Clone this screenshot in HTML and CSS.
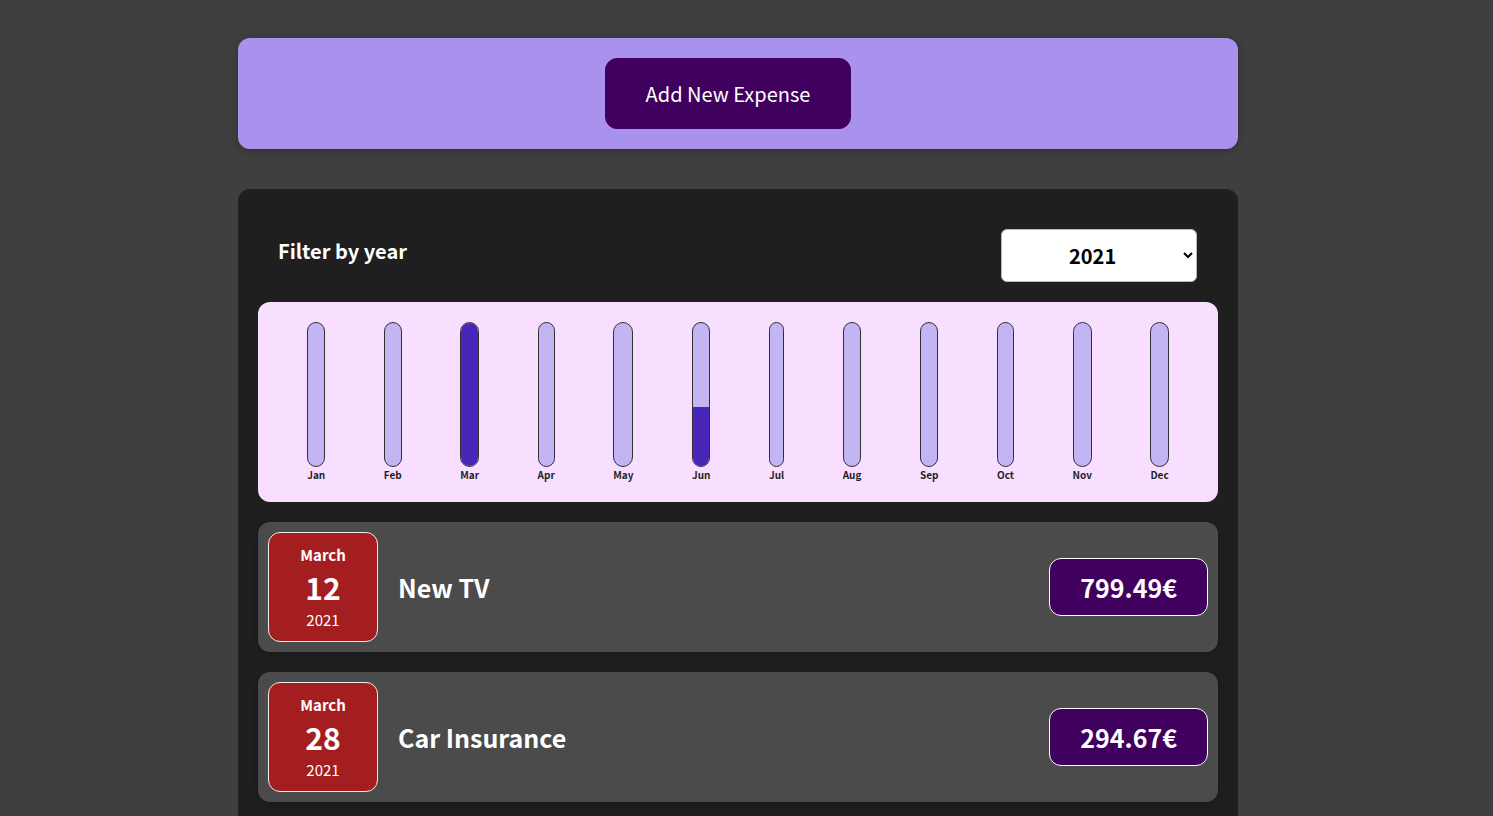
FILE: index.html
```html
<!DOCTYPE html>
<html lang="en">
<head>
<meta charset="utf-8">
<title>Expenses</title>
<link rel="stylesheet" href="styles.css">
</head>
<body>
<div class="new-expense">
  <button class="new-expense__btn">Add New Expense</button>
</div>
<div class="expenses">
  <div class="expenses-filter">
    <div class="expenses-filter__control">
      <label>Filter by year</label>
      <select>
        <option>2022</option>
        <option selected>2021</option>
        <option>2020</option>
        <option>2019</option>
      </select>
    </div>
  </div>
  <div class="chart">
    <div class="chart-bar"><div class="chart-bar__inner"></div><div class="chart-bar__label">Jan</div></div>
    <div class="chart-bar"><div class="chart-bar__inner"></div><div class="chart-bar__label">Feb</div></div>
    <div class="chart-bar"><div class="chart-bar__inner"><div class="chart-bar__fill" style="height:100%"></div></div><div class="chart-bar__label">Mar</div></div>
    <div class="chart-bar"><div class="chart-bar__inner"></div><div class="chart-bar__label">Apr</div></div>
    <div class="chart-bar"><div class="chart-bar__inner"></div><div class="chart-bar__label">May</div></div>
    <div class="chart-bar"><div class="chart-bar__inner"><div class="chart-bar__fill" style="height:41.13%"></div></div><div class="chart-bar__label">Jun</div></div>
    <div class="chart-bar"><div class="chart-bar__inner"></div><div class="chart-bar__label">Jul</div></div>
    <div class="chart-bar"><div class="chart-bar__inner"></div><div class="chart-bar__label">Aug</div></div>
    <div class="chart-bar"><div class="chart-bar__inner"></div><div class="chart-bar__label">Sep</div></div>
    <div class="chart-bar"><div class="chart-bar__inner"></div><div class="chart-bar__label">Oct</div></div>
    <div class="chart-bar"><div class="chart-bar__inner"></div><div class="chart-bar__label">Nov</div></div>
    <div class="chart-bar"><div class="chart-bar__inner"></div><div class="chart-bar__label">Dec</div></div>
  </div>
  <ul class="expenses-list">
    <li class="expense-item">
      <div class="expense-date">
        <div class="expense-date__month">March</div>
        <div class="expense-date__day">12</div>
        <div class="expense-date__year">2021</div>
      </div>
      <div class="expense-item__description">
        <h2>New TV</h2>
        <div class="expense-item__price">799.49€</div>
      </div>
    </li>
    <li class="expense-item">
      <div class="expense-date">
        <div class="expense-date__month">March</div>
        <div class="expense-date__day">28</div>
        <div class="expense-date__year">2021</div>
      </div>
      <div class="expense-item__description">
        <h2>Car Insurance</h2>
        <div class="expense-item__price">294.67€</div>
      </div>
    </li>
  </ul>
</div>
</body>
</html>
```

FILE: styles.css
```css
* {
  box-sizing: border-box;
}

html {
  font-family: "Noto Sans CJK JP", "Noto Sans", sans-serif;
  font-size: 20px;
}

body {
  margin: 0;
  padding: 38px 17px 0 0;
  background-color: #3f3f3f;
  overflow: hidden;
}

.new-expense {
  background-color: #a892ee;
  padding: 20px;
  margin: 0 auto;
  width: 1000px;
  border-radius: 12px;
  text-align: center;
  box-shadow: 0 1px 8px rgba(0, 0, 0, 0.25);
}

.new-expense__btn {
  font: inherit;
  cursor: pointer;
  padding: 20px 40px;
  border: 1px solid #40005d;
  background-color: #40005d;
  color: white;
  border-radius: 12px;
  margin-right: 20px;
}

.expenses {
  padding: 20px;
  background-color: #1f1f1f;
  margin: 40px auto;
  width: 1000px;
  border-radius: 12px;
}

.expenses-filter {
  color: white;
  padding: 0 20px;
}

.expenses-filter__control {
  display: flex;
  width: 100%;
  align-items: center;
  justify-content: space-between;
  margin: 20px 0;
}

.expenses-filter label {
  font-weight: bold;
  margin-bottom: 10px;
}

.expenses-filter select {
  font: inherit;
  padding: 10px 63px;
  font-weight: bold;
  border-radius: 6px;
  border: 1px solid #b9b9b9;
  background-color: white;
  color: black;
  margin-right: 1px;
}

.chart {
  padding: 20px;
  border-radius: 12px;
  background-color: #f8dfff;
  text-align: center;
  display: flex;
  justify-content: space-around;
  height: 200px;
}

.chart-bar {
  height: 100%;
  display: flex;
  flex-direction: column;
  align-items: center;
}

.chart-bar__inner {
  height: 100%;
  width: 100%;
  border: 1px solid #313131;
  border-radius: 12px;
  background-color: #c3b4f3;
  overflow: hidden;
  display: flex;
  flex-direction: column;
  justify-content: flex-end;
}

.chart-bar__fill {
  background-color: #4826b9;
  width: 100%;
}

.chart-bar__label {
  font-weight: bold;
  font-size: 10px;
  text-align: center;
  color: #1f1f1f;
}

.expenses-list {
  list-style: none;
  padding: 0;
  margin: 0;
}

.expense-item {
  display: flex;
  justify-content: space-between;
  align-items: center;
  box-shadow: 0 2px 8px rgba(0, 0, 0, 0.25);
  padding: 10px;
  margin: 20px 0;
  border-radius: 12px;
  background-color: #4b4b4b;
}

.expense-date {
  display: flex;
  flex-direction: column;
  width: 110px;
  height: 110px;
  border: 1px solid #ececec;
  background-color: #a51e1f;
  color: white;
  border-radius: 12px;
  align-items: center;
  justify-content: center;
}

.expense-date__month {
  font-size: 15px;
  font-weight: bold;
}

.expense-date__year {
  font-size: 15px;
}

.expense-date__day {
  font-size: 30px;
  font-weight: bold;
}

.expense-item__description {
  display: flex;
  flex: 1;
  align-items: center;
  justify-content: flex-start;
}

.expense-item h2 {
  font-size: 25px;
  flex: 1;
  margin: 0 20px;
  color: white;
}

.expense-item__price {
  font-size: 25px;
  font-weight: bold;
  color: white;
  background-color: #40005d;
  border: 1px solid white;
  padding: 10px 30px;
  border-radius: 12px;
}
```
